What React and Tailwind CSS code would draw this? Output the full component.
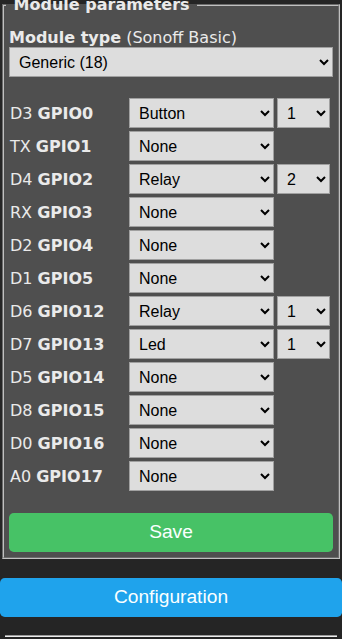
import React from 'react';

const rows = [
  { pin: 'D3', gpio: 'GPIO0', value: 'Button', idx: '1' },
  { pin: 'TX', gpio: 'GPIO1', value: 'None' },
  { pin: 'D4', gpio: 'GPIO2', value: 'Relay', idx: '2' },
  { pin: 'RX', gpio: 'GPIO3', value: 'None' },
  { pin: 'D2', gpio: 'GPIO4', value: 'None' },
  { pin: 'D1', gpio: 'GPIO5', value: 'None' },
  { pin: 'D6', gpio: 'GPIO12', value: 'Relay', idx: '1' },
  { pin: 'D7', gpio: 'GPIO13', value: 'Led', idx: '1' },
  { pin: 'D5', gpio: 'GPIO14', value: 'None' },
  { pin: 'D8', gpio: 'GPIO15', value: 'None' },
  { pin: 'D0', gpio: 'GPIO16', value: 'None' },
  { pin: 'A0', gpio: 'GPIO17', value: 'None' },
];

const kinds = ['None', 'Button', 'Relay', 'Led'];

const Select = ({ value, options, className }) => (
  <select
    defaultValue={value}
    className={`h-[30px] px-[5px] bg-[#dddddd] text-black border border-[#a0a0a0] text-[16px] font-['Liberation_Sans',Arial,sans-serif] ${className}`}
  >
    {options.map((o) => (
      <option key={o} value={o}>{o}</option>
    ))}
  </select>
);

const GpioRow = ({ pin, gpio, value, idx }) => (
  <div className="flex items-center h-[30px]">
    <div className="w-[120px] pl-[1px] leading-[19px]">
      {pin} <b>{gpio}</b>
    </div>
    <Select value={value} options={kinds} className="w-[145px]" />
    {idx && (
      <Select value={idx} options={['1', '2', '3', '4']} className="w-[53px] ml-[3px]" />
    )}
  </div>
);

export default function App() {
  return (
    <div className="w-[342px] min-h-screen overflow-hidden flex flex-col bg-[#252525] text-[#eaeaea] text-[16px] font-['DejaVu_Sans',Verdana,sans-serif]">
      <fieldset className="-mt-[5px] mx-[2px] px-[5px] pt-0 pb-[5px] bg-[#4f4f4f] border-2 border-[#c0c0c0] [border-style:groove]">
        <legend className="-ml-[3px] px-[2px] leading-[19px] font-bold">
          {'\u00a0Module parameters\u00a0'}
        </legend>
        <div className="mt-[14px] leading-[19px]">
          <b>Module type</b> (Sonoff Basic)
        </div>
        <Select value="Generic (18)" options={['Sonoff Basic (1)', 'Generic (18)']} className="w-full block" />
        <div className="mt-[21px] flex flex-col gap-[3px]">
          {rows.map((r) => (
            <GpioRow key={r.gpio} {...r} />
          ))}
        </div>
        <button className="mt-[22px] w-full h-[39px] rounded-[0.3rem] bg-[#47c266] text-[#faffff] text-[19.2px] font-['Liberation_Sans',Arial,sans-serif]">
          Save
        </button>
      </fieldset>
      <button className="mt-[19px] w-full h-[39px] rounded-[0.3rem] bg-[#1fa3ec] text-[#faffff] text-[19.2px] font-['Liberation_Sans',Arial,sans-serif]">
        Configuration
      </button>
      <div className="mt-[18px] mx-[5px] border-t border-b border-t-[#9a9a9a] border-b-[#eeeeee]" />
    </div>
  );
}
